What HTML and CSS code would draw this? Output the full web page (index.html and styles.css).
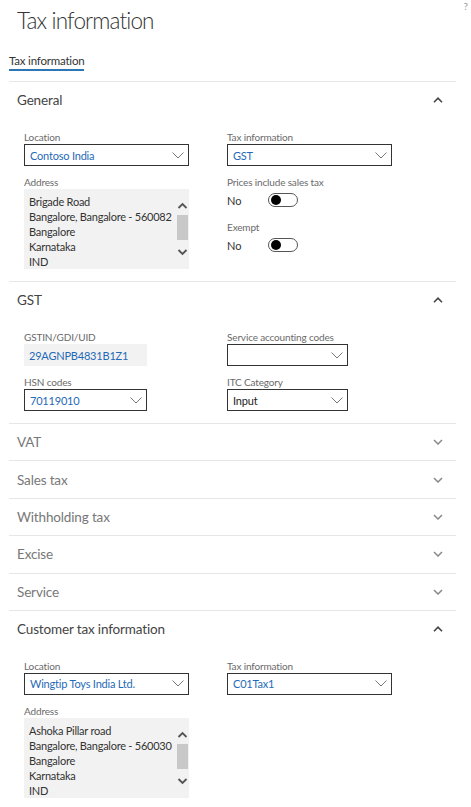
FILE: index.html
```html
<!DOCTYPE html>
<html lang="en">
<head>
<meta charset="utf-8">
<title>Tax information</title>
<link rel="stylesheet" href="styles.css">
</head>
<body>
<header class="top">
  <h1 class="title">Tax information</h1>
  <span class="help">?</span>
</header>
<nav class="tabs"><span class="tab">Tax information</span></nav>

<main class="tabs-body">
  <section class="fasttab open">
    <div class="ft-head"><span>General</span>
      <svg class="chev" width="10" height="6" viewBox="0 0 10 6"><path d="M1 5.2 L5 1.2 L9 5.2" fill="none" stroke="#444" stroke-width="1.6"/></svg>
    </div>
    <div class="ft-body">
      <div class="col">
        <div class="field">
          <label>Location</label>
          <div class="select"><span>Contoso India</span><svg width="12" height="7" viewBox="0 0 12 7"><path d="M0.5 0.5 L6 6 L11.5 0.5" fill="none" stroke="#777" stroke-width="1"/></svg></div>
        </div>
        <div class="field">
          <label>Address</label>
          <div class="address">
            <div>Brigade Road</div>
            <div>Bangalore, Bangalore - 560082</div>
            <div>Bangalore</div>
            <div>Karnataka</div>
            <div>IND</div>
            <div class="scroll">
              <svg width="11" height="12" viewBox="0 0 11 12"><path d="M1.5 8 L5.5 4 L9.5 8" fill="none" stroke="#555" stroke-width="1.8"/></svg>
              <div class="thumb"></div>
              <svg width="11" height="12" viewBox="0 0 11 12"><path d="M1.5 4 L5.5 8 L9.5 4" fill="none" stroke="#555" stroke-width="1.8"/></svg>
            </div>
          </div>
        </div>
      </div>
      <div class="col">
        <div class="field">
          <label>Tax information</label>
          <div class="select"><span>GST</span><svg width="12" height="7" viewBox="0 0 12 7"><path d="M0.5 0.5 L6 6 L11.5 0.5" fill="none" stroke="#777" stroke-width="1"/></svg></div>
        </div>
        <div class="field">
          <label>Prices include sales tax</label>
          <div class="toggle-row"><span class="toggle-text">No</span><span class="toggle"></span></div>
        </div>
        <div class="field">
          <label>Exempt</label>
          <div class="toggle-row"><span class="toggle-text">No</span><span class="toggle"></span></div>
        </div>
      </div>
    </div>
  </section>

  <section class="fasttab open">
    <div class="ft-head"><span>GST</span>
      <svg class="chev" width="10" height="6" viewBox="0 0 10 6"><path d="M1 5.2 L5 1.2 L9 5.2" fill="none" stroke="#444" stroke-width="1.6"/></svg>
    </div>
    <div class="ft-body">
      <div class="col">
        <div class="field">
          <label>GSTIN/GDI/UID</label>
          <div class="readonly">29AGNPB4831B1Z1</div>
        </div>
        <div class="field">
          <label>HSN codes</label>
          <div class="select small"><span>70119010</span><svg width="12" height="7" viewBox="0 0 12 7"><path d="M0.5 0.5 L6 6 L11.5 0.5" fill="none" stroke="#777" stroke-width="1"/></svg></div>
        </div>
      </div>
      <div class="col">
        <div class="field">
          <label>Service accounting codes</label>
          <div class="select small-r"><span></span><svg width="12" height="7" viewBox="0 0 12 7"><path d="M0.5 0.5 L6 6 L11.5 0.5" fill="none" stroke="#777" stroke-width="1"/></svg></div>
        </div>
        <div class="field">
          <label>ITC Category</label>
          <div class="select small-r plain"><span>Input</span><svg width="12" height="7" viewBox="0 0 12 7"><path d="M0.5 0.5 L6 6 L11.5 0.5" fill="none" stroke="#777" stroke-width="1"/></svg></div>
        </div>
      </div>
    </div>
  </section>

  <section class="fasttab closed">
    <div class="ft-head"><span>VAT</span><svg class="chev" width="10" height="6" viewBox="0 0 10 6"><path d="M1 1 L5 5 L9 1" fill="none" stroke="#888" stroke-width="1.5"/></svg></div>
  </section>
  <section class="fasttab closed">
    <div class="ft-head"><span>Sales tax</span><svg class="chev" width="10" height="6" viewBox="0 0 10 6"><path d="M1 1 L5 5 L9 1" fill="none" stroke="#888" stroke-width="1.5"/></svg></div>
  </section>
  <section class="fasttab closed">
    <div class="ft-head"><span>Withholding tax</span><svg class="chev" width="10" height="6" viewBox="0 0 10 6"><path d="M1 1 L5 5 L9 1" fill="none" stroke="#888" stroke-width="1.5"/></svg></div>
  </section>
  <section class="fasttab closed">
    <div class="ft-head"><span>Excise</span><svg class="chev" width="10" height="6" viewBox="0 0 10 6"><path d="M1 1 L5 5 L9 1" fill="none" stroke="#888" stroke-width="1.5"/></svg></div>
  </section>
  <section class="fasttab closed">
    <div class="ft-head"><span>Service</span><svg class="chev" width="10" height="6" viewBox="0 0 10 6"><path d="M1 1 L5 5 L9 1" fill="none" stroke="#888" stroke-width="1.5"/></svg></div>
  </section>

  <section class="fasttab open">
    <div class="ft-head"><span>Customer tax information</span>
      <svg class="chev" width="10" height="6" viewBox="0 0 10 6"><path d="M1 5.2 L5 1.2 L9 5.2" fill="none" stroke="#444" stroke-width="1.6"/></svg>
    </div>
    <div class="ft-body">
      <div class="col">
        <div class="field">
          <label>Location</label>
          <div class="select"><span>Wingtip Toys India Ltd.</span><svg width="12" height="7" viewBox="0 0 12 7"><path d="M0.5 0.5 L6 6 L11.5 0.5" fill="none" stroke="#777" stroke-width="1"/></svg></div>
        </div>
        <div class="field">
          <label>Address</label>
          <div class="address">
            <div>Ashoka Pillar road</div>
            <div>Bangalore, Bangalore - 560030</div>
            <div>Bangalore</div>
            <div>Karnataka</div>
            <div>IND</div>
            <div class="scroll">
              <svg width="11" height="12" viewBox="0 0 11 12"><path d="M1.5 8 L5.5 4 L9.5 8" fill="none" stroke="#555" stroke-width="1.8"/></svg>
              <div class="thumb"></div>
              <svg width="11" height="12" viewBox="0 0 11 12"><path d="M1.5 4 L5.5 8 L9.5 4" fill="none" stroke="#555" stroke-width="1.8"/></svg>
            </div>
          </div>
        </div>
      </div>
      <div class="col">
        <div class="field">
          <label>Tax information</label>
          <div class="select"><span>C01Tax1</span><svg width="12" height="7" viewBox="0 0 12 7"><path d="M0.5 0.5 L6 6 L11.5 0.5" fill="none" stroke="#777" stroke-width="1"/></svg></div>
        </div>
      </div>
    </div>
  </section>
</main>
</body>
</html>
```

FILE: styles.css
```css
* { box-sizing: border-box; margin: 0; padding: 0; }

body {
  margin: 0;
  width: 471px;
  height: 807px;
  overflow: hidden;
  background: #fff;
  color: #333;
  font-family: Lato, "Liberation Sans", sans-serif;
}

.top {
  display: flex;
  justify-content: space-between;
  align-items: flex-start;
  padding: 0 3px 0 17px;
}

.title {
  margin-top: 6px;
  font-size: 22.5px;
  font-weight: 300;
  line-height: 30px;
  letter-spacing: -0.85px;
  color: #333;
}

.help {
  font-size: 10px;
  line-height: 12px;
  color: #999;
}

.tabs {
  display: flex;
  margin: 17px 0 10px 9px;
}

.tab {
  font-size: 11.5px;
  line-height: 16px;
  letter-spacing: -0.2px;
  color: #333;
  border-bottom: 2px solid #2e75b6;
}

.tabs-body {
  margin: 0 15px 0 9px;
}

.fasttab {
  border-top: 1px solid #e6e6e6;
}

.ft-head {
  display: flex;
  justify-content: space-between;
  align-items: center;
  height: 36px;
  padding: 0 13px 0 8px;
  font-size: 13.5px;
  letter-spacing: -0.15px;
  color: #444;
}

.closed .ft-head {
  height: 36.4px;
  color: #777;
}

.ft-body {
  display: grid;
  grid-template-columns: 203px 1fr;
  padding: 12px 0 12px 15px;
}

.col {
  display: flex;
  flex-direction: column;
}

.field + .field {
  margin-top: 9px;
}

label {
  display: block;
  font-size: 10px;
  line-height: 14px;
  letter-spacing: -0.15px;
  color: #6a6a6a;
}

.select {
  display: flex;
  justify-content: space-between;
  align-items: center;
  width: 165px;
  height: 22px;
  padding: 0 4px 0 5px;
  border: 1px solid #333;
  font-size: 11px;
  letter-spacing: -0.2px;
  color: #1f6ab8;
}

.select.small { width: 123px; }
.select.small-r { width: 121px; }
.select.plain { color: #222; }

.readonly {
  display: flex;
  align-items: center;
  width: 123px;
  height: 22px;
  padding-left: 5px;
  background: #f2f2f2;
  font-size: 11px;
  letter-spacing: -0.2px;
  color: #1f6ab8;
}

.address {
  position: relative;
  width: 165px;
  height: 80px;
  padding: 5px 0 0 5px;
  background: #f2f2f2;
  font-size: 11px;
  line-height: 15px;
  letter-spacing: -0.25px;
  color: #333;
  overflow: hidden;
  white-space: nowrap;
}

.scroll {
  position: absolute;
  top: 11px;
  right: 1px;
  width: 11px;
  display: flex;
  flex-direction: column;
  align-items: center;
}

.thumb {
  width: 11px;
  height: 25px;
  margin: 3px 0 6px;
  background: #c8c8c8;
}

.toggle-row {
  display: flex;
  align-items: center;
  height: 22px;
}

.toggle-text {
  width: 41px;
  font-size: 11px;
  color: #333;
}

.toggle {
  display: flex;
  align-items: center;
  width: 30px;
  height: 14px;
  padding-left: 2px;
  border: 1px solid #555;
  border-radius: 7px;
}

.toggle::before {
  content: "";
  width: 10px;
  height: 10px;
  border-radius: 50%;
  background: #000;
}
```
